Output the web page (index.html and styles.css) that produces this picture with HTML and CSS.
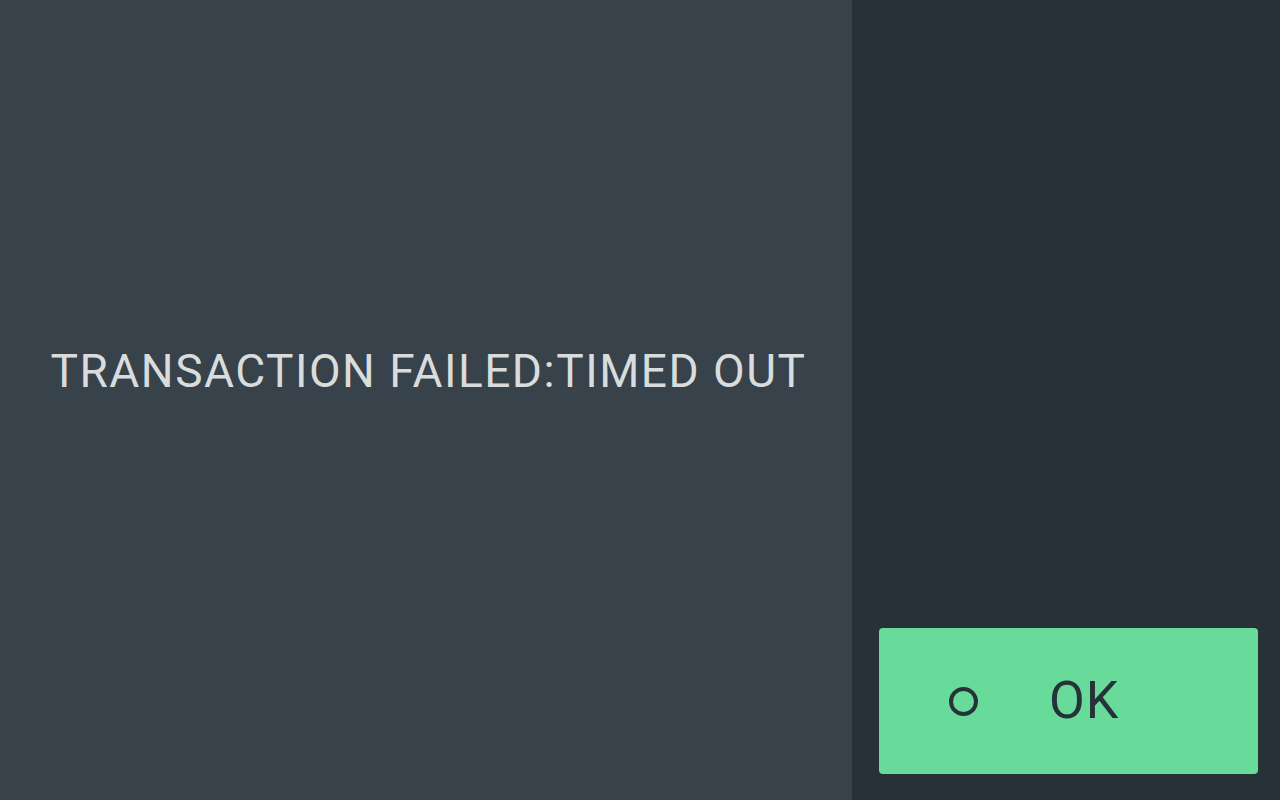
FILE: index.html
```html
<!DOCTYPE HTML>
<html lang="en">
<head>
<meta charset="UTF-8">
<title>Transaction</title>
<link rel="stylesheet" href="styles.css">
</head>
<body>
<div class="screen">
    <div class="message">
        <span class="messageText">TRANSACTION FAILED:TIMED OUT</span>
    </div>
    <div class="sidebar">
        <button class="okButton">
            <span class="okIcon"></span>
            <span class="okLabel">OK</span>
        </button>
    </div>
</div>
</body>
</html>
```
FILE: styles.css
```css
html, body {
    margin: 0;
    padding: 0;
    height: 100%;
}

body {
    background-color: #263238;
    font-family: Roboto, "Liberation Sans", sans-serif;
}

.screen {
    display: flex;
    width: 1280px;
    height: 800px;
}

/* left part with the status text */
.message {
    width: 852px;
    background-color: #37424a;
    display: flex;
    align-items: center;
    justify-content: center;
    padding: 0 0 58px 5px;
    box-sizing: border-box;
}

.messageText {
    color: #d9dcdd;
    font-size: 46px;
    letter-spacing: 1.5px;
}

.sidebar {
    flex: 1;
    background-color: #263238;
    display: flex;
    align-items: flex-end;
    padding: 0 22px 26px 27px;
}

.okButton {
    width: 379px;
    height: 146px;
    background-color: #68db9a;
    border: none;
    border-radius: 4px;
    display: flex;
    align-items: center;
    padding: 0 0 0 70px;
    cursor: pointer;
}

.okIcon {
    width: 21px;
    height: 21px;
    border: 4px solid #263238;
    border-radius: 50%;
}

.okLabel {
    margin-left: 71px;
    color: #263238;
    font-family: Roboto, "Liberation Sans", sans-serif;
    font-size: 52px;
    letter-spacing: 1px;
    line-height: 1;
}
```
